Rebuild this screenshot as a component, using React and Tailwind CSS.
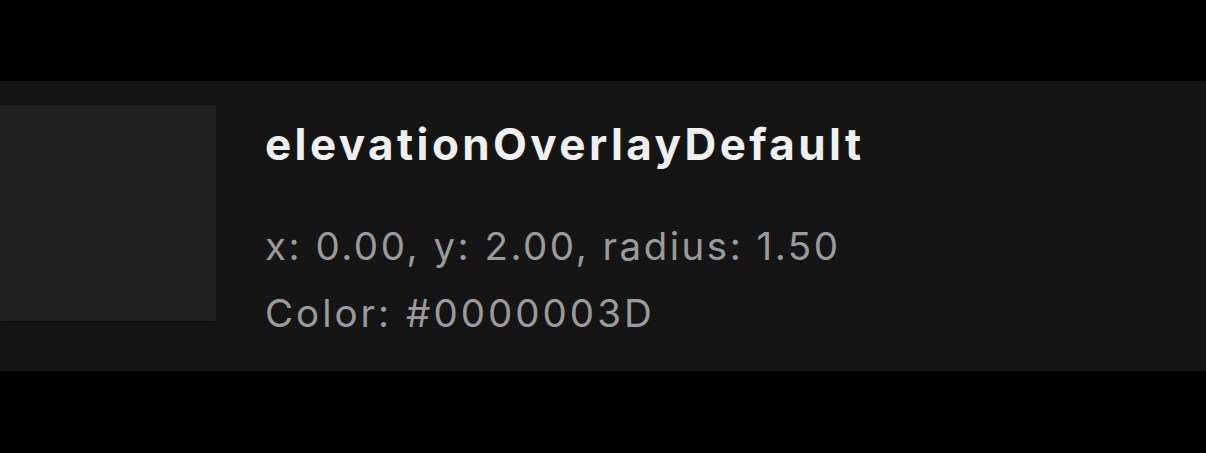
export default function App() {
  return (
    <div className="w-[1206px] h-[453px] bg-black pt-[81px]" style={{ fontFamily: 'Inter, "Noto Sans", sans-serif' }}>
      <div className="h-[290px] bg-[#151515] flex items-start pt-[24px]">
        <div className="w-[216px] h-[216px] bg-[#202020] shadow-[0_2px_3px_rgba(0,0,0,0.24)] shrink-0" />
        <div className="ml-[49px] flex flex-col mt-[17px]">
          <div className="text-[44px] font-bold text-[#efefef] leading-[44px] tracking-[3.4px] whitespace-nowrap">
            elevationOverlayDefault
          </div>
          <div className="text-[38.5px] text-[#9b9b9b] leading-[67px] tracking-[2.5px] mt-[47px] whitespace-nowrap">
            x: 0.00, y: 2.00, radius: 1.50
          </div>
          <div className="text-[38.5px] text-[#9b9b9b] leading-[67px] tracking-[3px] whitespace-nowrap">
            Color: #0000003D
          </div>
        </div>
      </div>
    </div>
  );
}
